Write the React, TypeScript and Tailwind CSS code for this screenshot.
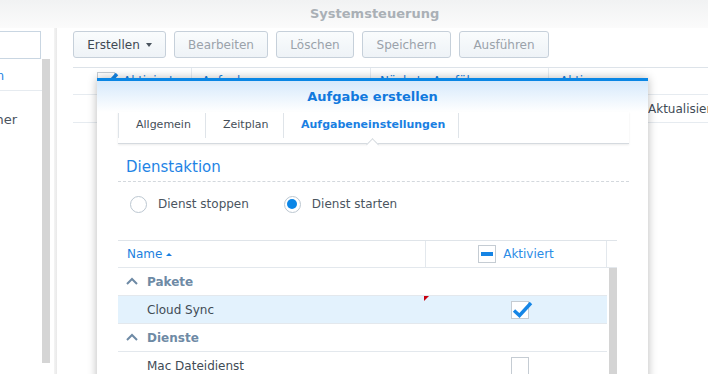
const FONT = { fontFamily: '"DejaVu Sans", Verdana, sans-serif' };

function ToolButton({ label, width, active, caret }: { label: string; width: string; active?: boolean; caret?: boolean }) {
  return (
    <div
      className={`${width} shrink-0 h-[27px] flex items-center justify-center gap-[6px] rounded-[3px] border border-[#c6d0da] bg-gradient-to-b from-[#fafcfd] to-[#eef3f7] text-[12px] ${
        active ? "text-[#3f4953]" : "text-[#9aa2aa]"
      }`}
    >
      <span>{label}</span>
      {caret && <span className="w-0 h-0 border-x-[3.5px] border-x-transparent border-t-[4px] border-t-[#4a545e] mt-[1px]" />}
    </div>
  );
}

function CheckBox({ checked, minus }: { checked?: boolean; minus?: boolean }) {
  return (
    <div className="relative shrink-0 w-[18px] h-[18px] border border-[#c5ccd3] bg-white flex items-center justify-center">
      {minus && <div className="w-[12px] h-[4px] bg-[#1584e4]" />}
      {checked && (
        <svg className="absolute left-[-1px] top-[-3px]" width="22" height="20" viewBox="0 0 22 20">
          <path d="M3 11.5 L8.5 16.5 L20 4" fill="none" stroke="#1686e6" strokeWidth="3.4" strokeLinecap="butt" strokeLinejoin="miter" />
        </svg>
      )}
    </div>
  );
}

function Radio({ selected, label }: { selected?: boolean; label: string }) {
  return (
    <div className="flex items-center gap-[11px]">
      <div className="w-[17px] h-[17px] rounded-full border border-[#bcc7d1] bg-white flex items-center justify-center">
        {selected && <div className="w-[10px] h-[10px] rounded-full bg-[#0b86e6]" />}
      </div>
      <span className="text-[12px] text-[#4b555f]">{label}</span>
    </div>
  );
}

function GroupRow({ label }: { label: string }) {
  return (
    <div className="h-[28px] border-b border-[#e3e8ed] flex items-center pl-[8px] gap-[9px]">
      <svg width="12" height="8" viewBox="0 0 12 8" className="mt-[-1px]">
        <path d="M1 7 L6 2 L11 7" fill="none" stroke="#6e8aa5" strokeWidth="2" />
      </svg>
      <span className="text-[12px] font-bold text-[#6e8aa5]">{label}</span>
    </div>
  );
}

function ItemRow({ label, checked, selected, dirty }: { label: string; checked?: boolean; selected?: boolean; dirty?: boolean }) {
  return (
    <div className={`h-[28px] border-b border-[#e3e8ed] flex ${selected ? "bg-[#e3f2fd]" : "bg-white"}`}>
      <div className="relative w-[308px] flex items-center pl-[29px] text-[12px] text-[#414b55]">
        {label}
        {dirty && <div className="absolute right-[-3px] top-0 w-0 h-0 border-t-[5px] border-t-[#c8000e] border-r-[5px] border-r-transparent" />}
      </div>
      <div className="flex-1 flex items-center justify-center pl-[7px]">
        <CheckBox checked={checked} />
      </div>
    </div>
  );
}

export default function App() {
  return (
    <div className="relative w-[708px] h-[374px] overflow-hidden bg-white text-[#414b55]" style={FONT}>
      {/* window title */}
      <div className="h-[28px] bg-gradient-to-b from-[#f1f2f3] to-[#fbfbfb] flex items-center pl-[310px] text-[13px] font-bold text-[#aab0b6]">
        Systemsteuerung
      </div>

      <div className="flex h-[346px]">
        {/* left list */}
        <div className="w-[50px] shrink-0 flex flex-col pt-[3px]">
          <div className="w-[41px] h-[28px] border border-l-0 border-[#c9d6e2] bg-white" />
          <div className="flex">
            <div className="w-[42px] flex flex-col overflow-hidden">
              <div className="h-[32px] border-b border-[#e6ebf0] flex items-center justify-end text-[12px] text-[#1a7fdf] pt-[3px]">
                <span className="mr-[38px] whitespace-nowrap">Aufgabenplan</span>
              </div>
              <div className="h-[30px] flex items-center justify-end text-[13px] text-[#4a545e] pt-[27px] ">
                <span className="mr-[25px] whitespace-nowrap">Speicher</span>
              </div>
            </div>
            <div className="w-[8px] h-[304px] bg-[#d5d5d5]" />
          </div>
        </div>

        {/* divider */}
        <div className="w-[7px] shrink-0 flex justify-end">
          <div className="w-[3px] h-full bg-gradient-to-r from-[#f4f4f4] to-[#e9e9e9]" />
        </div>

        {/* main panel */}
        <div className="flex-1 min-w-0 overflow-hidden pl-[16px] pt-[3px]">
          <div className="flex gap-[8px]">
            <ToolButton label="Erstellen" width="w-[93px]" active caret />
            <ToolButton label="Bearbeiten" width="w-[94px]" />
            <ToolButton label="Löschen" width="w-[78px]" />
            <ToolButton label="Speichern" width="w-[89px]" />
            <ToolButton label="Ausführen" width="w-[90px]" />
          </div>

          <div className="mt-[9px] border-t border-[#dde3e9]">
            <div className="h-[27px] border-b border-[#e6ebf0] flex text-[12px] text-[#1a7fdf] whitespace-nowrap">
              <div className="w-[119px] shrink-0 border-r border-[#e6ebf0] flex items-center pl-[24px] gap-[8px]">
                <CheckBox checked />
                <span>Aktiviert</span>
              </div>
              <div className="w-[179px] shrink-0 border-r border-[#e6ebf0] flex items-center pl-[10px]">Aufgabe</div>
              <div className="w-[178px] shrink-0 border-r border-[#e6ebf0] flex items-center pl-[9px]">Nächste Ausführung</div>
              <div className="flex-1 flex items-center pl-[11px]">Aktion</div>
            </div>
            <div className="h-[28px] border-b border-[#e6ebf0] flex items-center text-[12px] text-[#414b55] pl-[575px] whitespace-nowrap">
              Aktualisieren
            </div>
          </div>
        </div>
      </div>

      {/* dialog */}
      <div className="absolute left-[97px] top-[78px] w-[551px] h-[310px] bg-white border-t-[3px] border-[#0a86e4] shadow-[0_0_9px_rgba(0,0,0,0.28)]">
        <div className="h-[31px] bg-gradient-to-b from-[#d6e9fb] to-white flex items-center justify-center text-[13px] font-bold text-[#1179dd]">
          Aufgabe erstellen
        </div>

        <div className="pl-[21px] pr-[19px]">
          {/* tabs */}
          <div className="relative h-[32px] border-b border-[#d5dadf] shadow-[0_1px_2px_rgba(0,0,0,0.08)] flex pt-[1px] text-[11px]">
            <div className="w-[87px] h-[25px] border-l border-[#dfe4e9] flex items-center pl-[17px] text-[#444e58]">Allgemein</div>
            <div className="w-[78px] h-[25px] border-l border-[#dfe4e9] flex items-center pl-[17px] text-[#444e58]">Zeitplan</div>
            <div className="relative w-[176px] h-[25px] border-x border-[#dfe4e9] flex items-center pl-[17px] font-bold text-[#1a7fe2]">
              Aufgabeneinstellungen
              <div className="absolute left-[84px] top-[27px] w-[9px] h-[9px] rotate-45 bg-white border-l border-t border-[#d5dadf]" />
            </div>
          </div>

          <div className="mt-[14px] pb-[5px] border-b border-dashed border-[#d3d8dd] text-[15px] leading-[18px] text-[#1f84e5] pl-[8px]">
            Dienstaktion
          </div>

          <div className="mt-[13px] flex items-center gap-[35px] pl-[12px]">
            <Radio label="Dienst stoppen" />
            <Radio label="Dienst starten" selected />
          </div>

          {/* table */}
          <div className="mt-[27px] w-[499px] border-t border-[#dfe4e9]">
            <div className="h-[27px] border-b border-[#e3e8ed] flex text-[12px]">
              <div className="w-[308px] border-r border-[#e3e8ed] flex items-center pl-[9px] gap-[4px] text-[#1b7fe0]">
                Name
                <span className="w-0 h-0 border-x-[3px] border-x-transparent border-b-[3px] border-b-[#1b7fe0] mt-[1px]" />
              </div>
              <div className="w-[181px] border-r border-[#e3e8ed] flex items-center justify-center gap-[7px] text-[#2b8ce6]">
                <CheckBox minus />
                <span>Aktiviert</span>
              </div>
              <div className="flex-1" />
            </div>
            <div className="flex gap-[2px]">
              <div className="w-[489px]">
                <GroupRow label="Pakete" />
                <ItemRow label="Cloud Sync" checked selected dirty />
                <GroupRow label="Dienste" />
                <ItemRow label="Mac Dateidienst" />
              </div>
              <div className="w-[8px] h-[120px] bg-[#d4d4d4]" />
            </div>
          </div>
        </div>
      </div>
    </div>
  );
}
